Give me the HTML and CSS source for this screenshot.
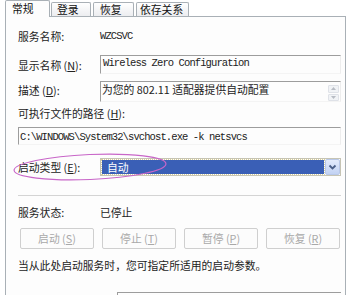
FILE: index.html
```html
<!DOCTYPE html>
<html lang="zh-CN">
<head>
<meta charset="utf-8">
<title>Wireless Zero Configuration 属性</title>
<link rel="stylesheet" href="styles.css">
</head>
<body>
<div class="tabs">
  <div class="tab active">常规</div>
  <div class="tab t2">登录</div>
  <div class="tab t3">恢复</div>
  <div class="tab t4">依存关系</div>
</div>
<div class="panel">
  <div class="row r1"><span class="lbl">服务名称:</span><span class="mono">WZCSVC</span></div>
  <div class="row r2"><span class="lbl">显示名称 (<u>N</u>):</span><div class="field disp mono">Wireless Zero Configuration</div></div>
  <div class="row r3"><span class="lbl">描述 (<u>D</u>):</span>
    <div class="field desc"><span class="dtext">为您的 802.11 适配器提供自动配置</span>
      <div class="spin"><span class="sb"><svg width="5" height="3" viewBox="0 0 5 3"><path d="M0 3L2.5 0L5 3Z" fill="#b8bcc4"/></svg></span><span class="sb"><svg width="5" height="3" viewBox="0 0 5 3"><path d="M0 0L2.5 3L5 0Z" fill="#b8bcc4"/></svg></span></div>
    </div>
  </div>
  <div class="row r4"><span class="lbl">可执行文件的路径 (<u>H</u>):</span></div>
  <div class="field path mono">C:\WINDOWS\System32\svchost.exe -k netsvcs</div>
  <div class="row r6"><span class="lbl">启动类型 (<u>E</u>):</span>
    <div class="combo"><div class="sel">自动</div><div class="drop"><svg width="13" height="14" viewBox="0 0 13 14"><path d="M3.5 5.5L6.5 8.5L9.5 5.5" fill="none" stroke="#4a5f88" stroke-width="1.8"/></svg></div></div>
  </div>
  <div class="sep"></div>
  <div class="row r7"><span class="lbl">服务状态:</span><span class="val">已停止</span></div>
  <div class="btns">
    <div class="btn">启动 (<u>S</u>)</div>
    <div class="btn">停止 (<u>T</u>)</div>
    <div class="btn">暂停 (<u>P</u>)</div>
    <div class="btn">恢复 (<u>R</u>)</div>
  </div>
  <p class="hint">当从此处启动服务时，您可指定所适用的启动参数。</p>
  <div class="row r9"><span class="lbl2"></span><div class="field param"></div></div>
</div>
<svg class="mark" width="160" height="34" viewBox="0 0 160 34"><ellipse cx="78" cy="16" rx="76" ry="12.5" transform="rotate(-2.5 78 16)" fill="none" stroke="#c866c8" stroke-width="1.2"/></svg>
</body>
</html>
```

FILE: styles.css
```css
* { box-sizing: border-box; }
html, body { margin: 0; padding: 0; }
body {
  width: 355px;
  height: 295px;
  overflow: hidden;
  background: #ffffff;
  font-family: "Noto Sans CJK SC", "Liberation Sans", sans-serif;
  font-size: 10.8px;
  color: #222;
  position: relative;
}
u { text-decoration: underline; text-underline-offset: 1px; }

.tabs {
  display: flex;
  align-items: flex-end;
  height: 16px;
  padding-left: 5px;
}
.tab {
  height: 14px;
  border: 1px solid #a9b0b6;
  border-bottom: none;
  border-radius: 2px 2px 0 0;
  background: linear-gradient(#ffffff, #ecedf0);
  line-height: 13px;
  padding-left: 5px;
  color: #111;
}
.tab.active {
  height: 17px;
  width: 45px;
  margin-bottom: -1px;
  padding-left: 6px;
  line-height: 15px;
  background: #fdfdfd;
  position: relative;
  z-index: 1;
}
.t2 { width: 40px; margin-left: 1px; }
.t3 { width: 41px; margin-left: 2px; padding-left: 6px; }
.t4 { width: 53px; margin-left: 2px; padding-left: 3px; }

.panel {
  margin-left: 5px;
  width: 341px;
  height: 279px;
  border: 1px solid #a9b0b6;
  border-bottom: none;
  background: #fdfdfd;
  padding: 0 4px 0 12px;
}
.row { display: flex; align-items: flex-start; }
.lbl { width: 82px; flex: none; line-height: 14px; white-space: nowrap; }
.mono {
  font-family: "Liberation Mono", "Noto Sans CJK SC", monospace;
  font-size: 10.5px;
  letter-spacing: -0.9px;
  color: #222;
}
.r1 { margin-top: 12px; height: 14px; line-height: 14px; }
.r2 { margin-top: 12px; }
.r2 .lbl { padding-top: 3px; }
.field {
  border-top: 1px solid #9d9d9d;
  border-left: 1px solid #9d9d9d;
  border-right: 1px solid #ededed;
  border-bottom: 1px solid #f4f4f4;
  background: #fdfdfd;
}
.disp { flex: 1; height: 19px; line-height: 12px; padding: 1px 0 0 2px; }
.r3 { margin-top: 7px; }
.r3 .lbl { padding-top: 2px; }
.desc { flex: 1; height: 21px; display: flex; justify-content: space-between; padding: 1px 1px 0 1px; }
.dtext { line-height: 13px; }
.spin { display: flex; flex-direction: column; gap: 1px; margin-top: 2px; }
.sb {
  width: 11px; height: 8px;
  border: 1px solid #dfe2e8;
  border-radius: 1px;
  background: #f1f3f6;
  display: flex; align-items: center; justify-content: center;
}
.r4 { margin-top: 4px; height: 14px; }
.r4 .lbl { width: auto; }
.path { margin-top: 7px; height: 18px; line-height: 14px; padding: 2px 0 0 1px; }
.r6 { margin-top: 13px; }
.r6 .lbl { padding-top: 2px; }
.combo {
  flex: 1;
  height: 18px;
  display: flex;
  border: 1px solid #c6c4b4;
  background: #fff;
}
.sel {
  flex: 1;
  margin: 1px 0 1px 1px;
  background: #3a5fb6;
  color: #fff;
  line-height: 14px;
  padding-left: 5px;
  outline: 1px dotted #d8cf9c;
}
.drop {
  width: 15px;
  flex: none;
  margin: 0 0 0 1px;
  border: 1px solid #b9c8e8;
  border-radius: 2px;
  background: linear-gradient(#e3ebfc, #c2d2f3);
  display: flex; align-items: center; justify-content: center;
}
.sep { margin-top: 19px; height: 1px; background: #d4d4d4; }
.r7 { margin-top: 9px; height: 14px; line-height: 14px; }
.btns { margin-top: 9px; display: flex; gap: 8px; padding-left: 2px; }
.btn {
  width: 74px;
  height: 21px;
  border: 1px solid #cfcfcf;
  border-radius: 2px;
  background: #fcfcfc;
  color: #a9a9a9;
  text-align: center;
  line-height: 19px;
}
.hint { margin: 9px 0 0 0; line-height: 14px; white-space: nowrap; }
.r9 { margin-top: 20px; }
.lbl2 { width: 99px; flex: none; }
.param { flex: 1; height: 3px; border-bottom: none; border-right: none; }

.mark { position: absolute; left: 12px; top: 151px; }
```
